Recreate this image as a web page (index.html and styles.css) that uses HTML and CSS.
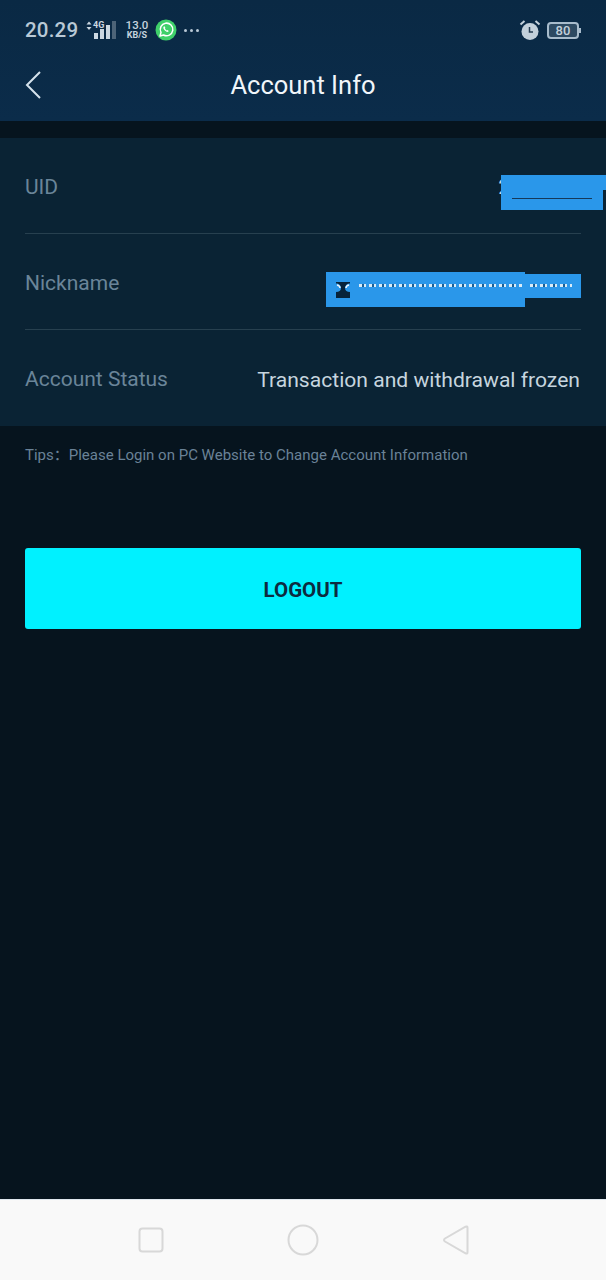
FILE: index.html
```html
<!DOCTYPE html>
<html lang="en">
<head>
<meta charset="utf-8">
<title>Account Info</title>
<link rel="stylesheet" href="styles.css">
</head>
<body>
<div class="screen">
  <header class="top">
    <div class="status">
      <div class="status-left">
        <span class="clock">20.29</span>
        <svg class="signal" width="32" height="22" viewBox="0 0 32 22">
          <path class="arrows" d="M4 2.500 6.500 5.500h-5zM4 11 1.500 8h5z"/>
          <rect class="bar" x="9" y="14" width="4" height="6"/>
          <rect class="bar" x="15" y="10" width="4" height="10"/>
          <rect class="bar" x="21" y="6" width="4" height="14"/>
          <rect class="bar-off" x="27" y="2" width="4" height="18"/>
          <text class="g4" x="8" y="9">4G</text>
        </svg>
        <span class="speed"><span class="speed-num">13.0</span><span class="speed-unit">KB/S</span></span>
        <svg class="wa" width="22" height="22" viewBox="0 0 22 22">
          <circle cx="11" cy="11" r="10.500" fill="#3fd06a"/>
          <path d="M5 17l1-3.600A6.300 6.300 0 1 1 8.600 16z" fill="none" stroke="#fff" stroke-width="1.500" stroke-linejoin="round"/>
          <path d="M8.800 7.600c-.8.800-.6 2 .6 3.500 1.300 1.500 2.600 2.200 3.700 1.700l.7-.9-1.500-1-.7.500c-.7-.3-1.300-1-1.700-1.800l.5-.7-.8-1.600z" fill="#fff"/>
        </svg>
        <span class="dots"><i></i><i></i><i></i></span>
      </div>
      <div class="status-right">
        <svg class="alarm" width="22" height="22" viewBox="0 0 22 22">
          <circle cx="11" cy="12.500" r="8.500" fill="#c3d0da"/>
          <path d="M1.500 5.500 5.500 2M20.500 5.500 16.500 2" stroke="#c3d0da" stroke-width="2" fill="none"/>
          <path d="M10.500 8v5h3.500" stroke="#243b50" stroke-width="1.500" fill="none"/>
        </svg>
        <span class="battery"><span class="battery-box">80</span><span class="battery-tip"></span></span>
      </div>
    </div>
    <div class="nav">
      <svg class="back" width="18" height="30" viewBox="0 0 18 30">
        <path d="M16 2 3 15l13 13" fill="none" stroke="#d5e2ec" stroke-width="2"/>
      </svg>
      <h1 class="title">Account Info</h1>
    </div>
  </header>

  <main class="content">
    <section class="card">
      <div class="row">
        <span class="label">UID</span>
        <span class="value uid-value">2</span>
      </div>
      <div class="row">
        <span class="label">Nickname</span>
      </div>
      <div class="row row-last">
        <span class="label">Account Status</span>
        <span class="value">Transaction and withdrawal frozen</span>
      </div>
      <div class="mask-uid"><span class="mask-line"></span></div>
      <div class="mask-uid-tab"></div>
      <div class="mask-nick">
        <svg class="mask-glyph" width="14" height="16" viewBox="0 0 14 16">
          <rect width="14" height="16" fill="#07233a"/>
          <path d="M0 1.500c3 0 5 2 5 4.500S3 10 0 10V1.500zM14 1.500c-3 0-5 2-5 4.500s2 4 5 4V1.500z" fill="#2a97ea"/>
          <path d="M1 3c2 .5 3 1.500 3 3M13 3c-2 .5-3 1.500-3 3" fill="none" stroke="#eef5fa" stroke-width="1.500"/>
        </svg>
        <span class="mask-dash"></span>
      </div>
      <div class="mask-nick-tab"><span class="mask-dash"></span></div>
    </section>
    <p class="tips">Tips：Please Login on PC Website to Change Account Information</p>
    <button class="logout" type="button">LOGOUT</button>
  </main>

  <footer class="softkeys">
    <svg class="key-square" width="26" height="26" viewBox="0 0 26 26"><rect x="1.500" y="1.500" width="23" height="23" rx="3" class="key"/></svg>
    <svg class="key-circle" width="32" height="32" viewBox="0 0 32 32"><circle cx="16" cy="16" r="14.500" class="key"/></svg>
    <svg class="key-back" width="28" height="32" viewBox="0 0 28 32"><path d="M25.500 3.500v25q0 1.500-2 .8L3 17.500q-2-1.500 0-3L23.500 2.700q2-.7 2 .8z" class="key"/></svg>
  </footer>
</div>
</body>
</html>
```

FILE: styles.css
```css
* { box-sizing: border-box; }
html, body { margin: 0; padding: 0; }
body { background: #06141e; font-family: Roboto, "Liberation Sans", sans-serif; }
.screen { width: 606px; height: 1280px; display: flex; flex-direction: column; overflow: hidden; }

.top { height: 121px; background: linear-gradient(#0a2944, #0b2c4a); flex: none; }
.status { height: 60px; padding: 0 25px; display: flex; align-items: center; justify-content: space-between; }
.status-left { display: flex; align-items: center; }
.status-right { display: flex; align-items: center; gap: 6px; }
.clock { font-size: 20.500px; font-weight: 500; color: #b9c9d6; letter-spacing: .2px; width: 60px; }
.signal { margin-right: 7px; }
.arrows, .bar { fill: #ccd8e2; }
.bar-off { fill: #4d6478; }
.g4 { font: 700 9px Roboto, sans-serif; fill: #ccd8e2; }
.speed { display: flex; flex-direction: column; align-items: center; width: 26px; margin-right: 5px; color: #c6d3de; font-weight: 500; }
.speed-num { font-size: 11.500px; line-height: 11px; }
.speed-unit { font-size: 9px; line-height: 9px; font-weight: 700; }
.dots { display: flex; gap: 3px; margin-left: 7px; }
.dots i { width: 3px; height: 3px; border-radius: 50%; background: #b9c9d6; }
.battery { display: flex; align-items: center; }
.battery-box { width: 32px; height: 17px; border: 2px solid #a8bccc; border-radius: 4px; font-size: 13px; font-weight: 500; color: #c3d0da; line-height: 13px; text-align: center; background: #2d4a62; }
.battery-tip { width: 2px; height: 5px; background: #a8bccc; }

.nav { height: 50px; position: relative; display: flex; align-items: center; justify-content: center; }
.back { position: absolute; left: 24px; top: 10px; }
.title { margin: 0; font-size: 25.500px; font-weight: 400; color: #f1f6fa; line-height: 52px; }

.content { flex: 1; padding-top: 17px; display: flex; flex-direction: column; }
.card { background: #0a2334; position: relative; padding: 0 25px; height: 288px; }
.row { height: 96px; display: flex; align-items: center; justify-content: space-between; border-bottom: 1px solid #27404f; padding-top: 2px; }
.row-last { border-bottom: 0; }
.label { font-size: 21px; color: #6a8599; }
.value { font-size: 21.100px; color: #c6d5df; margin: 0 1px 0 auto; }
.uid-value { position: relative; left: -70px; }

.mask-uid { position: absolute; left: 501px; top: 37px; width: 102px; height: 35px; background: #2a97ea; }
.mask-line { position: absolute; left: 11px; top: 23px; width: 80px; height: 1px; background: #15395a; }
.mask-uid-tab { position: absolute; left: 603px; top: 37px; width: 3px; height: 15px; background: #2a97ea; }
.mask-nick { position: absolute; left: 326px; top: 134px; width: 199px; height: 35px; background: #2a97ea; }
.mask-glyph { position: absolute; left: 10px; top: 10px; }
.mask-nick .mask-dash { position: absolute; left: 33px; right: 3px; top: 12px; }
.mask-nick-tab { position: absolute; left: 525px; top: 136px; width: 56px; height: 24px; background: #2a97ea; }
.mask-nick-tab .mask-dash { position: absolute; left: 5px; right: 9px; top: 10px; }
.mask-dash { height: 3px; display: block; background: repeating-linear-gradient(90deg, #d8ebf8 0 3px, #1c5f94 3px 5px, #d8ebf8 5px 7px, #2a97ea 7px 10px); }

.tips { margin: 19px 25px 0; font-family: Roboto, "Noto Sans CJK SC", sans-serif; font-size: 15px; line-height: 20px; color: #6a8297; }
.logout { margin: 83px 25px 0; height: 81px; border: 0; border-radius: 3px; background: #00f1ff; color: #0d2a3f; font: 700 20.500px Roboto, "Liberation Sans", sans-serif; padding: 2px 0 0; }

.softkeys { height: 81px; flex: none; background: #f9f9f9; border-top: 1px solid #dfe8ef; display: flex; align-items: center; padding-left: 138px; }
.key-circle { margin-left: 123px; }
.key-back { margin-left: 123px; }
.key { fill: none; stroke: #d8d8d8; stroke-width: 2; }
```
